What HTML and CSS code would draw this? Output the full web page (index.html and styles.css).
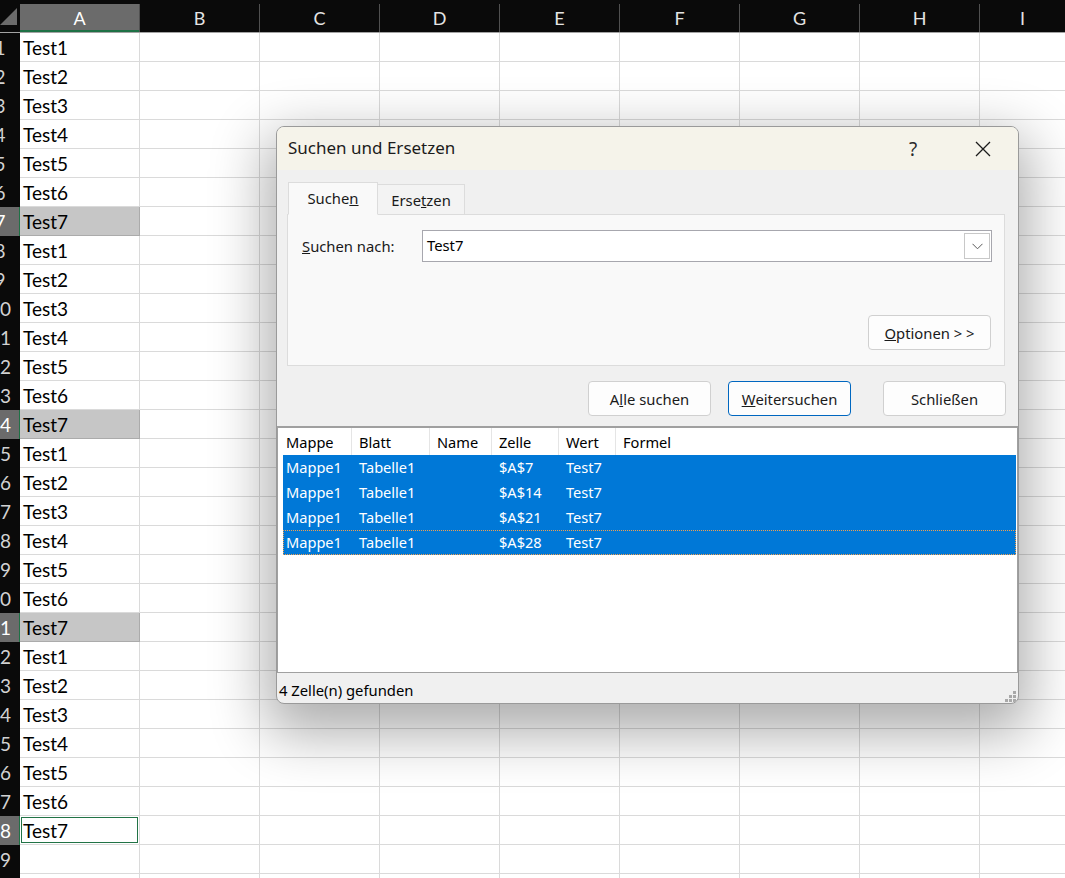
FILE: index.html
```html
<!DOCTYPE html>
<html lang="de">
<head>
<meta charset="utf-8">
<title>Suchen und Ersetzen</title>
<link rel="stylesheet" href="styles.css">
</head>
<body>
<div class="sheet">
  <div class="hdr">
    <div class="corner"><svg width="20" height="28" viewBox="0 0 20 28"><polygon points="17,6 17,23 0,23" fill="#6b6b6b"/></svg></div>
    <div class="ch sel">A</div><div class="ch">B</div><div class="ch">C</div><div class="ch">D</div><div class="ch">E</div><div class="ch">F</div><div class="ch">G</div><div class="ch">H</div><div class="ch last">I</div>
  </div>
  <div id="rows"></div>
</div>

<div class="dlg">
  <div class="titlebar">
    <span class="ttl">Suchen und Ersetzen</span>
    <span class="tb-btn help">?</span>
    <span class="tb-btn"><svg width="16" height="16" viewBox="0 0 16 16"><path d="M1 1 L15 15 M15 1 L1 15" stroke="#1b1b1b" stroke-width="1.3" fill="none"/></svg></span>
  </div>
  <div class="dbody">
    <div class="tabs">
      <div class="tab active">Suche<u>n</u></div>
      <div class="tab">Erse<u>t</u>zen</div>
    </div>
    <div class="panel">
      <div class="findrow">
        <span class="lbl"><u>S</u>uchen nach:</span>
        <div class="combo"><span class="val">Test7</span><span class="dd"><svg width="11" height="7" viewBox="0 0 11 7"><path d="M0.5 0.8 L5.5 5.8 L10.5 0.8" stroke="#5a5a5a" stroke-width="1" fill="none"/></svg></span></div>
      </div>
      <div class="optrow"><span class="btn"><u>O</u>ptionen &gt; &gt;</span></div>
    </div>
    <div class="btnrow">
      <span class="btn b1">A<u>l</u>le suchen</span>
      <span class="btn b2 def"><u>W</u>eitersuchen</span>
      <span class="btn">Schließen</span>
    </div>
  </div>
  <div class="results">
    <div class="lgrid lh">
      <span>Mappe</span><span>Blatt</span><span>Name</span><span>Zelle</span><span>Wert</span><span>Formel</span>
    </div>
    <div class="lgrid lr"><span>Mappe1</span><span>Tabelle1</span><span></span><span>$A$7</span><span>Test7</span><span></span></div>
    <div class="lgrid lr"><span>Mappe1</span><span>Tabelle1</span><span></span><span>$A$14</span><span>Test7</span><span></span></div>
    <div class="lgrid lr"><span>Mappe1</span><span>Tabelle1</span><span></span><span>$A$21</span><span>Test7</span><span></span></div>
    <div class="lgrid lr focus"><span>Mappe1</span><span>Tabelle1</span><span></span><span>$A$28</span><span>Test7</span><span></span></div>
  </div>
  <div class="status">
    <span>4 Zelle(n) gefunden</span>
    <svg class="grip" width="12" height="12" viewBox="0 0 12 12" fill="#a9a9a9"><rect x="9" y="1" width="3" height="3"/><rect x="5" y="5" width="3" height="3"/><rect x="9" y="5" width="3" height="3"/><rect x="1" y="9" width="3" height="3"/><rect x="5" y="9" width="3" height="3"/><rect x="9" y="9" width="3" height="3"/></svg>
  </div>
</div>
<script>
(function(){
  var host = document.getElementById('rows');
  var html = '';
  for (var r = 1; r <= 30; r++) {
    var has = r <= 28;
    var n = ((r - 1) % 7) + 1;
    var hit = has && n === 7;
    var cls = 'rh' + (hit ? ' sel' : '');
    html += '<div class="row"><div class="' + cls + '"><span>' + r + '</span></div>';
    var ac = 'c';
    if (hit && r !== 28) ac += ' hl';
    if (r === 28) ac += ' active';
    html += '<div class="' + ac + '">' + (has ? 'Test' + n : '') + '</div>';
    for (var k = 0; k < 7; k++) html += '<div class="c"></div>';
    html += '<div class="c last"></div></div>';
  }
  host.innerHTML = html;
})();
</script>
</body>
</html>
```

FILE: styles.css
```css
html, body {
  margin: 0;
  padding: 0;
}
body {
  width: 1065px;
  height: 878px;
  overflow: hidden;
  position: relative;
  background: #ffffff;
  font-family: Lato, "Noto Sans", sans-serif;
}

/* ---------- spreadsheet ---------- */
.sheet {
  display: flex;
  flex-direction: column;
}
.hdr {
  display: flex;
  height: 33px;
  box-sizing: border-box;
  padding-top: 4px;
  background: #0a0a0a;
  border-bottom: 1px solid #a3a3a3;
}
.corner {
  width: 20px;
  flex: none;
  margin-top: -4px;
  height: 32px;
  display: flex;
  align-items: flex-end;
}
.corner svg { display: block; margin-bottom: 2px; }
.ch {
  width: 120px;
  flex: none;
  box-sizing: border-box;
  border-right: 1px solid #505050;
  color: #e4e4e4;
  font-size: 18px;
  line-height: 28px;
  text-align: center;
}
.ch.sel {
  background: #6b6b6b;
  color: #ffffff;
  box-shadow: inset 0 -2px 0 #1e7145;
}
.ch.last {
  flex: 1;
  border-right: none;
}
.row {
  display: flex;
  height: 29px;
}
.rh {
  width: 20px;
  flex: none;
  overflow: hidden;
  background: #0a0a0a;
  color: #d2d2d2;
  font-size: 19px;
  line-height: 29px;
}
.rh span {
  display: block;
  width: 40px;
  margin-left: -20px;
  text-align: center;
}
.rh.sel {
  background: #6b6b6b;
  color: #ffffff;
  box-shadow: inset -1px 0 0 #1e7145;
}
.c {
  width: 120px;
  flex: none;
  box-sizing: border-box;
  border-right: 1px solid #dadada;
  border-bottom: 1px solid #dadada;
  padding-left: 3px;
  font-size: 19px;
  line-height: 29px;
  color: #000000;
}
.c.last { flex: 1; border-right: none; }
.c.hl {
  background: #c6c6c6;
  border-right-color: #ababab;
  border-bottom-color: #ababab;
}
.c.active {
  box-shadow: inset 0 0 0 1px #ffffff, inset 0 0 0 2px #217346;
}

/* ---------- dialog ---------- */
.dlg {
  position: absolute;
  left: 276px;
  top: 126px;
  width: 743px;
  height: 578px;
  box-sizing: border-box;
  border: 1px solid #9a9a9a;
  border-radius: 8px;
  overflow: hidden;
  background: #f0f0f0;
  box-shadow: 0 20px 56px 10px rgba(0, 0, 0, 0.32);
  font-family: "Noto Sans", "Open Sans", sans-serif;
  font-size: 14.8px;
  color: #1a1a1a;
  display: flex;
  flex-direction: column;
}
.titlebar {
  height: 43px;
  flex: none;
  background: #f5f3ea;
  display: flex;
  align-items: center;
}
.ttl {
  flex: 1;
  padding-left: 11px;
  padding-bottom: 2px;
  font-size: 17px;
  color: #1b1b1b;
}
.tb-btn {
  width: 70px;
  height: 43px;
  display: flex;
  align-items: center;
  justify-content: center;
}
.tb-btn.help {
  font-size: 19px;
  color: #2a2a2a;
}
.dbody {
  padding: 12px 13px 0 10px;
  flex: none;
}
.tabs {
  display: flex;
  height: 33px;
  margin-bottom: -1px;
  padding-left: 1px;
}
.tab {
  box-sizing: border-box;
  display: flex;
  align-items: center;
  justify-content: center;
}
.tab.active {
  position: relative;
  z-index: 1;
  width: 90px;
  height: 33px;
  background: #f9f9f9;
  border: 1px solid #dcdcdc;
  border-bottom-color: #f9f9f9;
  padding-bottom: 1px;
}
.tab:not(.active) {
  width: 87px;
  height: 31px;
  margin-top: 2px;
  background: #f3f3f3;
  border: 1px solid #dcdcdc;
  border-left: none;
  padding-top: 1px;
}
.panel {
  height: 152px;
  box-sizing: border-box;
  border: 1px solid #dcdcdc;
  background: #f9f9f9;
  padding: 15px 12px 15px 14px;
  display: flex;
  flex-direction: column;
  justify-content: space-between;
}
.findrow {
  display: flex;
  align-items: center;
  height: 32px;
}
.lbl {
  width: 120px;
  flex: none;
}
.combo {
  flex: 1;
  height: 32px;
  box-sizing: border-box;
  border: 1px solid #a7a7ae;
  background: #ffffff;
  display: flex;
  align-items: center;
  padding-left: 4px;
}
.val { color: #000; padding-bottom: 2px; }
.dd {
  margin-left: auto;
  margin-right: 1px;
  width: 26px;
  height: 26px;
  box-sizing: border-box;
  border: 1px solid #c8c8c8;
  background: #ffffff;
  display: flex;
  align-items: center;
  justify-content: center;
}
.optrow {
  display: flex;
  justify-content: flex-end;
  padding-right: 1px;
}
.btn {
  width: 123px;
  height: 35px;
  box-sizing: border-box;
  border: 1px solid #d0d0d0;
  border-radius: 4px;
  background: #fdfdfd;
  display: flex;
  align-items: center;
  justify-content: center;
  color: #1a1a1a;
}
.btn.def { border-color: #0067c0; }
.btnrow {
  margin-top: 15px;
  display: flex;
  justify-content: flex-end;
  margin-right: -1px;
}
.btnrow .b1 { margin-right: 17px; }
.btnrow .b2 { margin-right: 32px; }
.results {
  margin-top: 10px;
  height: 247px;
  flex: none;
  box-sizing: border-box;
  border: 1px solid #a0a0a0;
  border-top: 2px solid #a0a0a0;
  background: #ffffff;
  padding-left: 5px;
  padding-right: 1px;
  font-size: 14.6px;
}
.lgrid {
  display: grid;
  grid-template-columns: 68px 78px 62px 67px 57px 1fr;
}
.lgrid span {
  padding-left: 7px;
  white-space: nowrap;
  overflow: hidden;
}
.lgrid span:first-child { padding-left: 3px; }
.lh {
  height: 27px;
  align-items: center;
  color: #000;
}
.lh span {
  height: 27px;
  line-height: 29px;
  border-left: 1px solid #e5e5e5;
}
.lh span:first-child { border-left: none; }
.lr {
  height: 25px;
  line-height: 25px;
  background: #0078d7;
  color: #ffffff;
}
.lr span { border-left: 1px solid transparent; }
.lr span:first-child { border-left: none; }
.lr.focus {
  outline: 1px dotted #f0a050;
  outline-offset: -1px;
}
.status {
  flex: 1;
  display: flex;
  align-items: center;
  padding-left: 2px;
  padding-top: 3px;
  color: #000;
}
.grip {
  margin-left: auto;
  align-self: flex-end;
  margin-right: 2px;
  margin-bottom: 1px;
}
```
